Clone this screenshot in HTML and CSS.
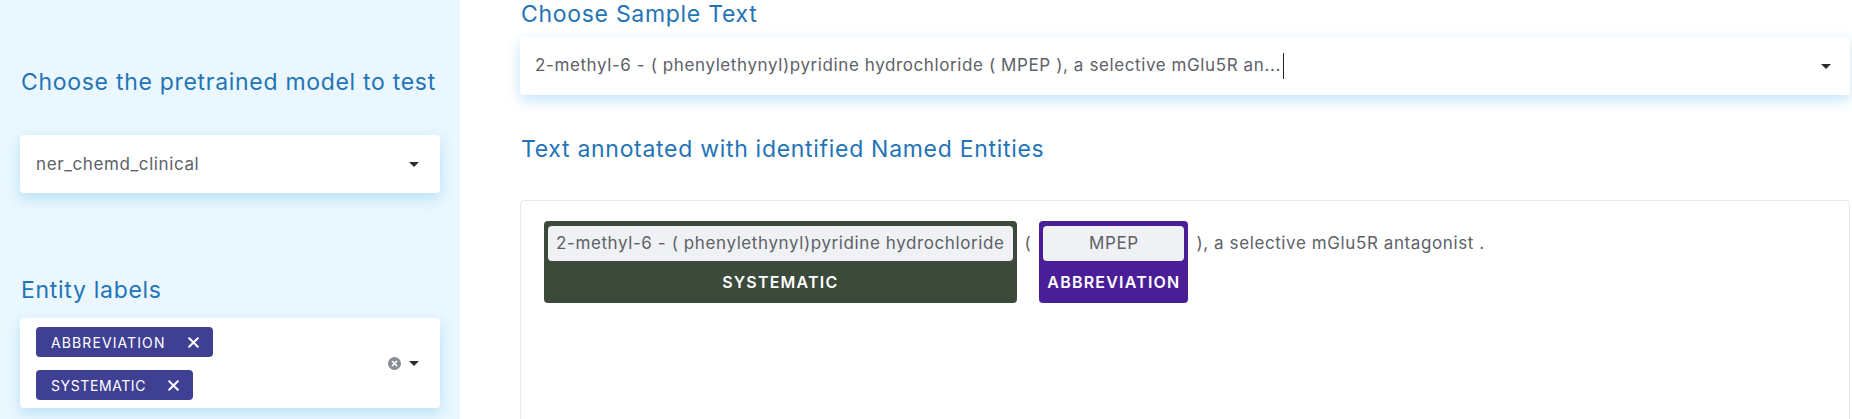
FILE: index.html
```html
<!DOCTYPE html>
<html>
<head>
<meta charset="utf-8">
<link rel="stylesheet" href="styles.css">
</head>
<body>
<div class="app">
  <aside class="sidebar">
    <h3 class="title model-title">Choose the pretrained model to test</h3>
    <div class="select model-select">
      <span class="value">ner_chemd_clinical</span>
      <span class="caret"></span>
    </div>
    <h3 class="title labels-title">Entity labels</h3>
    <div class="select multi-select">
      <div class="tags">
        <span class="tag abbr-tag">ABBREVIATION <svg class="tag-x" width="11" height="11" viewBox="0 0 11 11"><path d="M1.2 1.2 L9.8 9.8 M9.8 1.2 L1.2 9.8" stroke="#fff" stroke-width="2" stroke-linecap="round"/></svg></span>
        <span class="tag sys-tag">SYSTEMATIC <svg class="tag-x" width="11" height="11" viewBox="0 0 11 11"><path d="M1.2 1.2 L9.8 9.8 M9.8 1.2 L1.2 9.8" stroke="#fff" stroke-width="2" stroke-linecap="round"/></svg></span>
      </div>
      <div class="indicators">
        <span class="clear"><svg width="13" height="13" viewBox="0 0 13 13"><circle cx="6.5" cy="6.5" r="6.5" fill="#8a8c93"/><path d="M4.4 4.4 L8.6 8.6 M8.6 4.4 L4.4 8.6" stroke="#fff" stroke-width="1.5" stroke-linecap="round"/></svg></span>
        <span class="caret"></span>
      </div>
    </div>
  </aside>
  <main class="main">
    <h3 class="title sample-title">Choose Sample Text</h3>
    <div class="select sample-select">
      <span class="value">2-methyl-6 - ( phenylethynyl)pyridine hydrochloride ( MPEP ), a selective mGlu5R an...<span class="cursor"></span></span>
      <span class="caret"></span>
    </div>
    <h3 class="title annotated-title">Text annotated with identified Named Entities</h3>
    <div class="annotation">
      <div class="ann-row">
        <span class="entity systematic">
          <span class="ent-text">2-methyl-6 - ( phenylethynyl)pyridine hydrochloride</span>
          <span class="ent-label">SYSTEMATIC</span>
        </span>
        <span class="plain">(</span>
        <span class="entity abbreviation">
          <span class="ent-text">MPEP</span>
          <span class="ent-label">ABBREVIATION</span>
        </span>
        <span class="plain">), a selective mGlu5R antagonist .</span>
      </div>
    </div>
  </main>
</div>
</body>
</html>
```
FILE: styles.css
```css
* { box-sizing: border-box; }
html, body { margin: 0; padding: 0; }
body {
  font-family: Inter, "Open Sans", sans-serif;
  background: #ffffff;
  height: 419px;
  overflow: hidden;
}
.app {
  display: flex;
  height: 100%;
}
.sidebar {
  width: 460px;
  flex: none;
  background: #eaf7fe;
  padding: 68px 20px 0 20px;
  display: flex;
  flex-direction: column;
}
.sidebar > *, .main > * { flex: none; }
.title {
  margin: 0;
  font-weight: 400;
  font-size: 23px;
  line-height: 28px;
  letter-spacing: 0.7px;
  color: #2374b6;
  padding-left: 1px;
  white-space: nowrap;
}
.select {
  background: #fff;
  border-radius: 4px;
  box-shadow: 0 5px 14px rgba(120, 196, 236, 0.45);
  display: flex;
  align-items: center;
  justify-content: space-between;
}
.value {
  font-size: 17px;
  letter-spacing: 0.6px;
  color: #5d6168;
  white-space: nowrap;
}
.caret {
  width: 0;
  height: 0;
  border-left: 5px solid transparent;
  border-right: 5px solid transparent;
  border-top: 5px solid #2b2d33;
  flex: none;
}
.model-select {
  margin-top: 39px;
  height: 58px;
  padding: 0 21px 0 16px;
}
.labels-title { margin-top: 83px; }
.multi-select {
  margin-top: 14px;
  height: 90px;
  padding: 9px 21px 8px 16px;
}
.tags {
  display: flex;
  flex-direction: column;
  align-items: flex-start;
  gap: 13px;
}
.tag {
  display: inline-flex;
  align-items: center;
  height: 30px;
  padding: 0 14px 0 15px;
  background: #3f3f93;
  color: #fff;
  font-size: 14px;
  letter-spacing: 1.1px;
  border-radius: 4px;
}
.sys-tag { letter-spacing: 0.6px; }
.tag-x { display: block; margin-left: 22px; }
.indicators {
  display: flex;
  align-items: center;
  gap: 8px;
}
.clear { display: flex; }
.main {
  flex: 1;
  padding: 0 2px 0 60px;
  display: flex;
  flex-direction: column;
}
.sample-select {
  margin-top: 9px;
  height: 58px;
  padding: 0 19px 0 15px;
}
.cursor {
  display: inline-block;
  width: 1px;
  height: 26px;
  background: #222;
  vertical-align: -8px;
  margin-left: 2px;
}
.annotated-title { margin-top: 40px; }
.main > .annotation {
  flex: 1;
  min-height: 0;
  margin-top: 37px;
  border: 1px solid #e5e7ef;
  border-bottom: none;
  border-radius: 5px 5px 0 0;
  padding: 20px 15px;
}
.ann-row {
  display: flex;
  align-items: baseline;
  flex-wrap: wrap;
  font-size: 17px;
  letter-spacing: 0.6px;
  color: #5d6168;
}
.entity {
  display: inline-flex;
  flex-direction: column;
  padding: 5px 4px 0 4px;
  border-radius: 4px;
  margin: 0 8px;
}
.systematic { background: #3c4a3b; }
.abbreviation { background: #4a1e97; }
.ent-text {
  background: #f0f1f4;
  border-radius: 4px;
  height: 35px;
  line-height: 35px;
  padding: 0 8px;
  text-align: center;
  color: #5d6168;
  white-space: nowrap;
}
.ent-label {
  height: 42px;
  line-height: 42px;
  text-align: center;
  color: #fff;
  font-weight: 600;
  font-size: 16px;
  letter-spacing: 1.2px;
  padding: 0 4px;
}
.plain { white-space: nowrap; }
```
